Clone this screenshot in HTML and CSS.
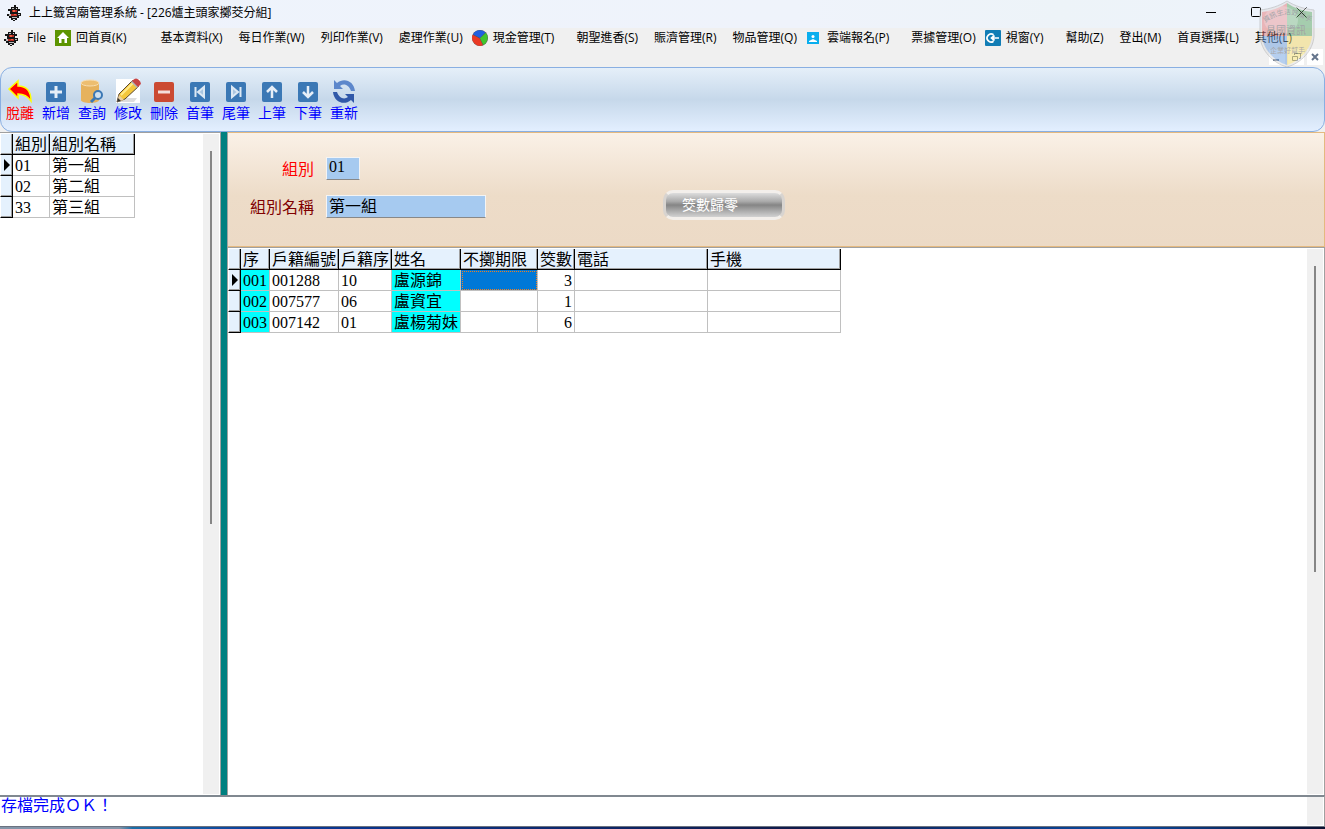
FILE: index.html
```
<!DOCTYPE html>
<html lang="zh-Hant">
<head>
	<meta charset="UTF-8">
	<title>上上籤宮廟管理系統</title>
	<link rel="stylesheet" href="styles.css">
</head>
<body>
	<svg class="defs">
		<symbol id="lamp" viewBox="0 0 15 16">
			<path d="M7 0h2v2h2v2h2v2h-2v2h3v3h-2v2h-2v2H8v1H6v-1H4v-2H2v-2H0V9h3V6H1V4h3V2h3z" fill="#161616"/>
			<path d="M5 3h2v1H5zM2 9h2v2H2zM11 9h2v1h-2zM5 12h5v1H5z" fill="#b9b9b9"/>
			<path d="M5 5h5v2H5zM4 9h6v2H4z" fill="#b52a20"/>
			<path d="M6 5h2v2H6zM7 9h2v1H7z" fill="#f06040"/>
			<path d="M9 3h1v1H9zM6 14h2v1H6z" fill="#ddd"/>
		</symbol>
	</svg>

	<header class="titlebar">
		<svg class="logo"><use href="#lamp"/></svg>
		<h1>上上籤宮廟管理系統 - [226爐主頭家擲茭分組]</h1>
		<div class="win-btns">
			<button aria-label="最小化"><svg viewBox="0 0 11 11"><path d="M0 5.500h10"/></svg></button>
			<button aria-label="最大化"><svg viewBox="0 0 11 11"><rect x=".5" y=".5" width="9" height="9" rx="1"/></svg></button>
			<button aria-label="關閉"><svg viewBox="0 0 11 11"><path d="M.5.5l10 10M10.500.5l-10 10"/></svg></button>
		</div>
	</header>

	<nav class="menu">
		<svg class="logo"><use href="#lamp"/></svg>
		<a href="#">File</a>
		<a href="#" class="has-icon home">
			<svg viewBox="0 0 16 16"><rect width="16" height="16" fill="#5c9400"/><path d="M8 2l6 6h-2v5H9.500V9h-3v4H4V8H2z" fill="#fff"/></svg>回首頁(K)</a>
		<a href="#">基本資料(X)</a>
		<a href="#">每日作業(W)</a>
		<a href="#">列印作業(V)</a>
		<a href="#">處理作業(U)</a>
		<a href="#" class="has-icon">
			<svg viewBox="0 0 16 16"><circle cx="8" cy="8" r="8" fill="#555"/><path d="M8 8L1 4.200A8 8 0 0 1 13.500 2.500z" fill="#2160e0"/><path d="M8 8.300L13.800 2.800A8 8 0 0 1 11.300 15z" fill="#3fc52c"/><path d="M7.700 8.500L10.900 15.300A8 8 0 0 1 .7 4.700z" fill="#ea3a25"/></svg>現金管理(T)</a>
		<a href="#">朝聖進香(S)</a>
		<a href="#">賑濟管理(R)</a>
		<a href="#">物品管理(Q)</a>
		<a href="#" class="has-icon">
			<svg viewBox="0 0 16 16"><rect x="1" y="2" width="12" height="12" fill="#09aeee"/><circle cx="7" cy="6.500" r="1.500" fill="#fff"/><path d="M3 12V11l4-2 4 2v1z" fill="#fff"/></svg>雲端報名(P)</a>
		<a href="#">票據管理(O)</a>
		<a href="#" class="has-icon">
			<svg viewBox="0 0 16 16"><rect width="16" height="16" rx="1" fill="#117db5"/><path d="M8.500 4.800A4 4 0 1 0 8.500 11.200M14 8H6M9.500 5.500L6.500 8l3 2.500" fill="none" stroke="#fff" stroke-width="1.700"/></svg>視窗(Y)</a>
		<a href="#">幫助(Z)</a>
		<a href="#">登出(M)</a>
		<a href="#">首頁選擇(L)</a>
		<a href="#">其他(L)</a>
	</nav>
	<div class="mdi-btns">
		<button aria-label="縮小子視窗"><svg viewBox="0 0 16 16"><path d="M4 11h6" stroke-width="2"/></svg></button>
		<button aria-label="還原子視窗"><svg viewBox="0 0 16 16"><path d="M6.500 6V4.500h6v5H11M4.500 7.500h5v4h-5z"/></svg></button>
		<button aria-label="關閉子視窗"><svg viewBox="0 0 16 16"><path d="M5 5l6 6M11 5l-6 6" stroke-width="2"/></svg></button>
	</div>

	<!-- 廠商盾牌 -->
	<svg class="shield" viewBox="0 0 56 68">
		<clipPath id="s"><path d="M28 3C21 8 12 11 3 12V36C4 49 15 61 28 65 41 61 52 49 53 36V12C44 11 35 8 28 3z"/></clipPath>
		<path d="M28 1C20 6 11 9 1 10V36C2 51 14 63 28 67 42 63 54 51 55 36V10C45 9 36 6 28 1z" fill="#ddd" stroke="#aaa"/>
		<g clip-path="url(#s)">
			<path d="M0 0h28v36H0z" fill="#e67878"/>
			<path d="M28 0h28v36H28z" fill="#5fa862"/>
			<path d="M0 36h28v32H0z" fill="#6fa0e0"/>
			<path d="M28 36h28v32H28z" fill="#f4dc6c"/>
			<ellipse cx="22" cy="20" rx="17" ry="14" fill="#fff" opacity=".25"/>
		</g>
		<path id="arc" d="M6 23Q28 6 52 23" fill="none"/>
		<text font-size="7"><textPath href="#arc">資訊生活好幫手</textPath></text>
		<text x="7" y="34" font-size="10">昌國資訊</text>
		<text x="11" y="53" font-size="7">企業好幫手</text>
	</svg>

	<div class="toolbar">
		<button class="exit"><svg viewBox="0 0 26 26"><path d="M2 11L11 3v5c8 0 13 5 13 15-4-6-8-7-13-7v4z" fill="#f00" stroke="#ff0" stroke-width="1.500"/></svg>脫離</button>
		<button><svg viewBox="0 0 26 26"><rect x="3" y="4" width="20" height="20" rx="2" fill="#3b78b5"/><path d="M13 8v12M7 14h12" stroke="#e6eef7" stroke-width="3"/></svg>新增</button>
		<button><svg viewBox="0 0 26 26"><path d="M2 5v17c0 4 18 4 18 0V5z" fill="#e6b25d"/><ellipse cx="11" cy="5" rx="9" ry="3" fill="#edbe70" stroke="#f8deb0"/><circle cx="19" cy="17" r="4" fill="#cfe0f0" stroke="#3b78b5" stroke-width="2"/><path d="M16 20l-4 4" stroke="#3b78b5" stroke-width="3"/></svg>查詢</button>
		<button><svg viewBox="0 0 26 26"><path d="M1 1h24v24H1z" fill="#fff"/><path d="M4 24h15l3-4H8z" fill="#ddd"/><path d="M2 24l2-8L18 2l6 6L10 21z" fill="#f4c73c" stroke="#5a4630"/><path d="M6 17L19 4" stroke="#ffe98a" stroke-width="2"/><path d="M16 4l6 6 2-2-6-6z" fill="#aeb6bd"/><path d="M18 2q3-3 6 0t1 5l-2 2-6-6z" fill="#c84444"/><path d="M2 24l2-7 5 5z" fill="#ecd0a0"/><path d="M2 24l1-4 3 3z" fill="#333"/></svg>修改</button>
		<button><svg viewBox="0 0 26 26"><rect x="3" y="4" width="20" height="20" rx="2" fill="#cb4a32"/><path d="M7 14h12" stroke="#f4dfdb" stroke-width="3"/></svg>刪除</button>
		<button><svg viewBox="0 0 26 26"><rect x="3" y="4" width="20" height="20" rx="2" fill="#3b78b5"/><path d="M8.500 9v10M17 9v10l-6-5z" stroke="#dce8f4" stroke-width="2" fill="#a9c5e0"/></svg>首筆</button>
		<button><svg viewBox="0 0 26 26"><rect x="3" y="4" width="20" height="20" rx="2" fill="#3b78b5"/><path d="M17.500 9v10M9 9v10l6-5z" stroke="#dce8f4" stroke-width="2" fill="#a9c5e0"/></svg>尾筆</button>
		<button><svg viewBox="0 0 26 26"><rect x="3" y="4" width="20" height="20" rx="2" fill="#3b78b5"/><path d="M13 20V9M8 14l5-5 5 5" fill="none" stroke="#e6eef7" stroke-width="2.500"/></svg>上筆</button>
		<button><svg viewBox="0 0 26 26"><rect x="3" y="4" width="20" height="20" rx="2" fill="#3b78b5"/><path d="M13 8v11M8 14l5 5 5-5" fill="none" stroke="#e6eef7" stroke-width="2.500"/></svg>下筆</button>
		<button><svg viewBox="0 0 26 26"><path d="M3 2v9h9L9 8c4-3 9-1 11 5h4C23 3 13-1 6 5z" fill="#5d87cb"/><path d="M23 25v-9h-9l3 3c-4 3-9 1-11-5H2c1 10 11 14 18 8z" fill="#3058a8"/></svg>重新</button>
	</div>

	<main>
		<section class="groups">
			<div class="pane">
				<table class="grid">
					<thead><tr><th class="mark"></th><th class="w-no">組別</th><th class="w-group">組別名稱</th></tr></thead>
					<tbody>
						<tr><td class="mark current"></td><td>01</td><td>第一組</td></tr>
						<tr><td class="mark"></td><td>02</td><td>第二組</td></tr>
						<tr><td class="mark"></td><td>33</td><td>第三組</td></tr>
					</tbody>
				</table>
			</div>
			<div class="scrollbar"><i></i></div>
		</section>
		<div class="splitter"></div>
		<section class="detail">
			<form class="panel">
				<label for="no" class="key">組別</label>
				<input id="no" class="short" value="01">
				<label for="name">組別名稱</label>
				<input id="name" value="第一組">
				<button type="button">筊數歸零</button>
			</form>
			<div class="list">
				<div class="pane">
					<table class="grid">
						<thead>
							<tr><th class="mark"></th><th class="w-seq">序</th><th class="w-id">戶籍編號</th><th class="w-sub">戶籍序</th><th class="w-name">姓名</th><th class="w-date">不擲期限</th><th class="w-num">筊數</th><th class="w-tel">電話</th><th class="w-tel">手機</th></tr>
						</thead>
						<tbody>
							<tr><td class="mark current"></td><td class="hl">001</td><td>001288</td><td>10</td><td class="hl">盧源錦</td><td class="selected"></td><td class="num">3</td><td></td><td></td></tr>
							<tr><td class="mark"></td><td class="hl">002</td><td>007577</td><td>06</td><td class="hl">盧資宜</td><td></td><td class="num">1</td><td></td><td></td></tr>
							<tr><td class="mark"></td><td class="hl">003</td><td>007142</td><td>01</td><td class="hl">盧楊菊妹</td><td></td><td class="num">6</td><td></td><td></td></tr>
						</tbody>
					</table>
				</div>
				<div class="scrollbar"><i></i></div>
			</div>
		</section>
	</main>

	<footer>
		<p>存檔完成ＯＫ！</p>
		<div class="scrollbar"></div>
	</footer>
	<div class="taskbar"></div>
</body>
</html>
```
FILE: styles.css
```
*{margin: 0; padding: 0; box-sizing: border-box;}
body{height: 100vh; display: flex; flex-direction: column; background: #f0f0f0; overflow: hidden; color: #000; font: 16px/20px "Liberation Serif", "Noto Sans CJK TC", serif;}
button{border: 0; background: none; font: inherit; color: inherit;}
a{color: inherit; text-decoration: none;}
.defs{position: absolute; width: 0; height: 0;}
.logo{width: 15px; height: 16px; flex: none;}

/* 標題列 */
.titlebar{flex: none; height: 28px; padding: 0 18px 3px 7px; display: flex; align-items: center; background: linear-gradient(90deg, #eef3fc, #eff3fb 60%, #edf3f8 80%, #eef3fc);}
.titlebar h1{margin-left: 7px; font: 12px/20px "Open Sans", "Noto Sans CJK TC", sans-serif;}
.win-btns{margin-left: auto; display: flex; gap: 34px;}
.win-btns button{width: 11px; height: 20px; display: flex; align-items: center;}
.win-btns svg{width: 11px; height: 11px; fill: none; stroke: #000;}

/* 選單 */
.menu{flex: none; height: 20px; padding-left: 4px; display: flex; align-items: center; white-space: nowrap; font: 12px/20px "Open Sans", "Noto Sans CJK TC", sans-serif;}
.menu a{padding: 0 8px; display: flex; align-items: center;}
.menu .has-icon{padding: 0 14px 0 1px;}
.menu .home{padding-right: 26px;}
.menu a svg{width: 16px; height: 16px; margin-right: 5px;}
.mdi-btns{flex: none; height: 19px; padding: 1px 2px; display: flex; justify-content: flex-end; gap: 3px;}
.mdi-btns button{width: 16px; height: 16px; background: #fff;}
.mdi-btns svg{display: block; fill: none; stroke: #64748b;}

.shield{position: absolute; top: 0; right: 10px; width: 56px; height: 68px; opacity: .5; pointer-events: none; font-family: "Noto Sans CJK TC", sans-serif; fill: #555;}

/* 工具列 */
.toolbar{flex: none; height: 65px; padding: 10px 1px 0; display: flex; border: 1px solid #89afe2; border-radius: 12px; background: linear-gradient(#e5eff9, #c6d8ea 50%, #e3efff);}
.toolbar button{width: 36px; height: 44px; display: flex; flex-direction: column; align-items: center; color: #00f; font: 14px/16px "Noto Sans CJK TC", sans-serif;}
.toolbar .exit{color: #f00;}
.toolbar svg{width: 26px; height: 26px;}

main{flex: 1; min-height: 0; display: flex;}
.groups{width: 220px; padding: 1px 1px 1px 0; display: flex; background: #fff; border-top: 1px solid #a0a0a0;}
.pane{flex: 1; overflow: hidden; background: #fff;}
.splitter{width: 8px; background: #008080; border: solid #a0a0a0; border-width: 0 1px;}
.detail{flex: 1; min-width: 0; display: flex; flex-direction: column;}
.scrollbar{width: 16px; flex: none; padding-top: 17px; background: #f0f0f0;}
.scrollbar i{display: block; width: 2px; height: 58%; margin: 0 auto; background: #868686;}

/* 表格 */
.grid{border-spacing: 0; table-layout: fixed; width: 1px; white-space: nowrap;}
.grid th, .grid td{height: 21px; padding: 2px 2px 0; overflow: hidden; text-align: left; font-weight: normal; line-height: 18px; border: solid #c0c0c0; border-width: 0 1px 1px 0;}
.grid th{background: #e5f1fd; border-color: #000; box-shadow: inset -1px -1px #a0a0a0;}
.grid .mark{width: 13px; padding-top: 0; background: #e5f1fd; border-color: #000; border-left: 1px solid #fff; box-shadow: inset -1px -1px #a0a0a0;}
.current::before{content: ""; display: block; margin-left: 1px; width: 0; height: 0; border: solid transparent; border-width: 6px 0 6px 6px; border-left-color: #000;}
.grid .hl{background: #0ff;}
.grid .selected{background: #0078d7; outline: 1px dotted #f08020; outline-offset: -2px;}
.grid .num{text-align: right;}
.w-no{width: 37px;}
.w-group{width: 85px;}
.w-seq{width: 29px;}
.w-id{width: 69px;}
.w-sub{width: 53px;}
.w-name{width: 69px;}
.w-date{width: 77px;}
.w-num{width: 37px;}
.w-tel{width: 133px;}

/* 主檔 */
.panel{flex: none; height: 115px; padding-top: 24px; display: grid; grid-template-columns: 86px 160px 122px; grid-template-rows: 23px 23px; gap: 15px 12px; border: 1px solid #e4b980; border-left: 0; background: linear-gradient(#faf1e7, #eddcc8 55%, #ecdac6);}
.panel label{text-align: right; color: #800000; line-height: 25px;}
.panel .key{color: #f00;}
.panel input{width: 160px; height: 23px; padding: 0 2px 3px; border: 1px solid #f4f4f4; border-bottom-color: #888; background: #a6caf0; font: inherit;}
.panel .short{width: 34px; margin-right: 200px;}
.panel label[for="name"]{grid-column: 1;}
.panel button{width: 122px; height: 30px; margin: -5px 0 0 165px; padding: 0 0 4px 16px; text-align: left; color: #fff; font: 14px/22px "Noto Sans CJK TC", sans-serif; border: 3px solid #eee; border-color: #f3efeb #d8d4d0; border-radius: 10px; background: linear-gradient(#ddd, #aaa 35%, #858585 50%, #d2d2d2);}

.list{flex: 1; min-height: 0; padding: 1px 1px 1px 0; display: flex; background: #fff; border: solid #a0a0a0; border-width: 1px 1px 0 0;}

footer{flex: none; height: 32px; padding: 0 1px 1px 0; display: flex; background: #fff; border: solid #a0a0a0; border-top-color: #808890; border-width: 2px 1px 1px 0; border-bottom-color: #6b7280;}
footer p{flex: 1; padding-left: 1px; color: #00f; line-height: 18px;}
.taskbar{flex: none; height: 2px; background: linear-gradient(90deg, #8495a8 9%, #1c6fa8 10%, #0a3a9a 20%, #101a4a 60%, #0a4aa0 85%, #0a1030);}
```
